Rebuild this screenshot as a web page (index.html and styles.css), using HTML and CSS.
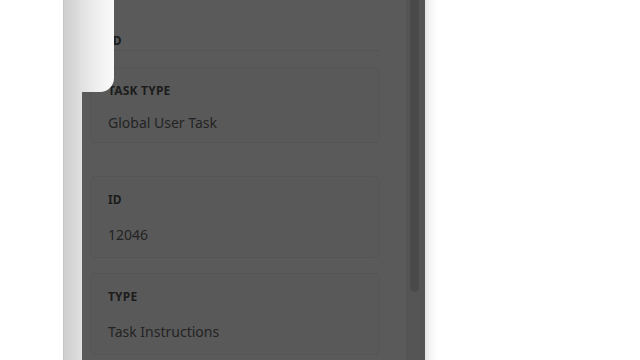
FILE: index.html
```html
<!DOCTYPE html>
<html lang="en">
<head>
  <meta charset="UTF-8" />
  <meta name="viewport" content="width=device-width, initial-scale=1.0"/>
  <title>Task Details</title>
  <link rel="stylesheet" href="styles.css">
</head>
<body>
  <div class="page">
    <div class="gutter"></div>
    <div class="rail"></div>

    <div class="panel">
      <div class="panel-body">
        <!-- header row, scrolled mostly out of view -->
        <div class="head">ID</div>

        <div class="card card-tight card-first">
          <div class="label">Task Type</div>
          <div class="value">Global User Task</div>
        </div>

        <div class="card card-second">
          <div class="label">ID</div>
          <div class="value">12046</div>
        </div>

        <div class="card card-third">
          <div class="label">Type</div>
          <div class="value">Task Instructions</div>
        </div>
      </div>

      <div class="scrollbar">
        <div class="thumb"></div>
      </div>

      <div class="tab"></div>
    </div>

    <div class="drawer"></div>
  </div>
</body>
</html>
```

FILE: styles.css
```css
html, body {
  margin: 0;
  height: 100%;
  overflow: hidden;
}
body {
  font-family: "Noto Sans", "Open Sans", sans-serif;
  background-color: #ffffff;
}
.page {
  display: flex;
  height: 360px;
}
.gutter {
  width: 63px;
  background: #ffffff;
}
.rail {
  width: 19px;
  background: linear-gradient(to right, #bdbdbd 0, #cfcfcf 1px, #dadada 70%, #e2e2e2 100%);
}
.panel {
  position: relative;
  width: 343px;
  display: flex;
  background-color: #5a5a5a;
}
.panel-body {
  flex: 1;
  padding: 0 26px 0 8px;
}
.head {
  height: 48px;
  display: flex;
  align-items: flex-end;
  padding: 0 0 2px 18px;
  font-size: 12px;
  font-weight: 700;
  line-height: 15px;
  color: #1c1c1c;
  border-bottom: 1px solid #545454;
}
.card {
  display: flex;
  flex-direction: column;
  gap: 18px;
  padding: 15px 17px 12px;
  background-color: #595959;
  border: 1px solid #555555;
  border-radius: 6px;
}
.card-tight {
  gap: 15px;
  padding-bottom: 9px;
}
.card-first {
  margin-top: 16px;
}
.card-second {
  margin-top: 33px;
}
.card-third {
  margin-top: 15px;
}
.label {
  font-size: 12px;
  font-weight: 700;
  line-height: 15px;
  letter-spacing: 0.2px;
  text-transform: uppercase;
  color: #1c1c1c;
}
.value {
  font-size: 14px;
  line-height: 20px;
  color: #232323;
}
.scrollbar {
  width: 15px;
  border-left: 1px solid #535353;
  background-color: #555555;
  padding-left: 3px;
}
.thumb {
  width: 9px;
  height: 292px;
  background-color: #4a4a4a;
  border-radius: 0 0 5px 5px;
}
.tab {
  position: absolute;
  top: 0;
  left: 0;
  width: 32px;
  height: 92px;
  border-bottom-right-radius: 14px;
  background: linear-gradient(to right, #e2e2e2, #f2f2f2 60%, #fafafa);
}
.drawer {
  flex: 1;
  background: linear-gradient(to right, #e4e4e4 0, #f4f4f4 5px, #ffffff 12px);
}
```
